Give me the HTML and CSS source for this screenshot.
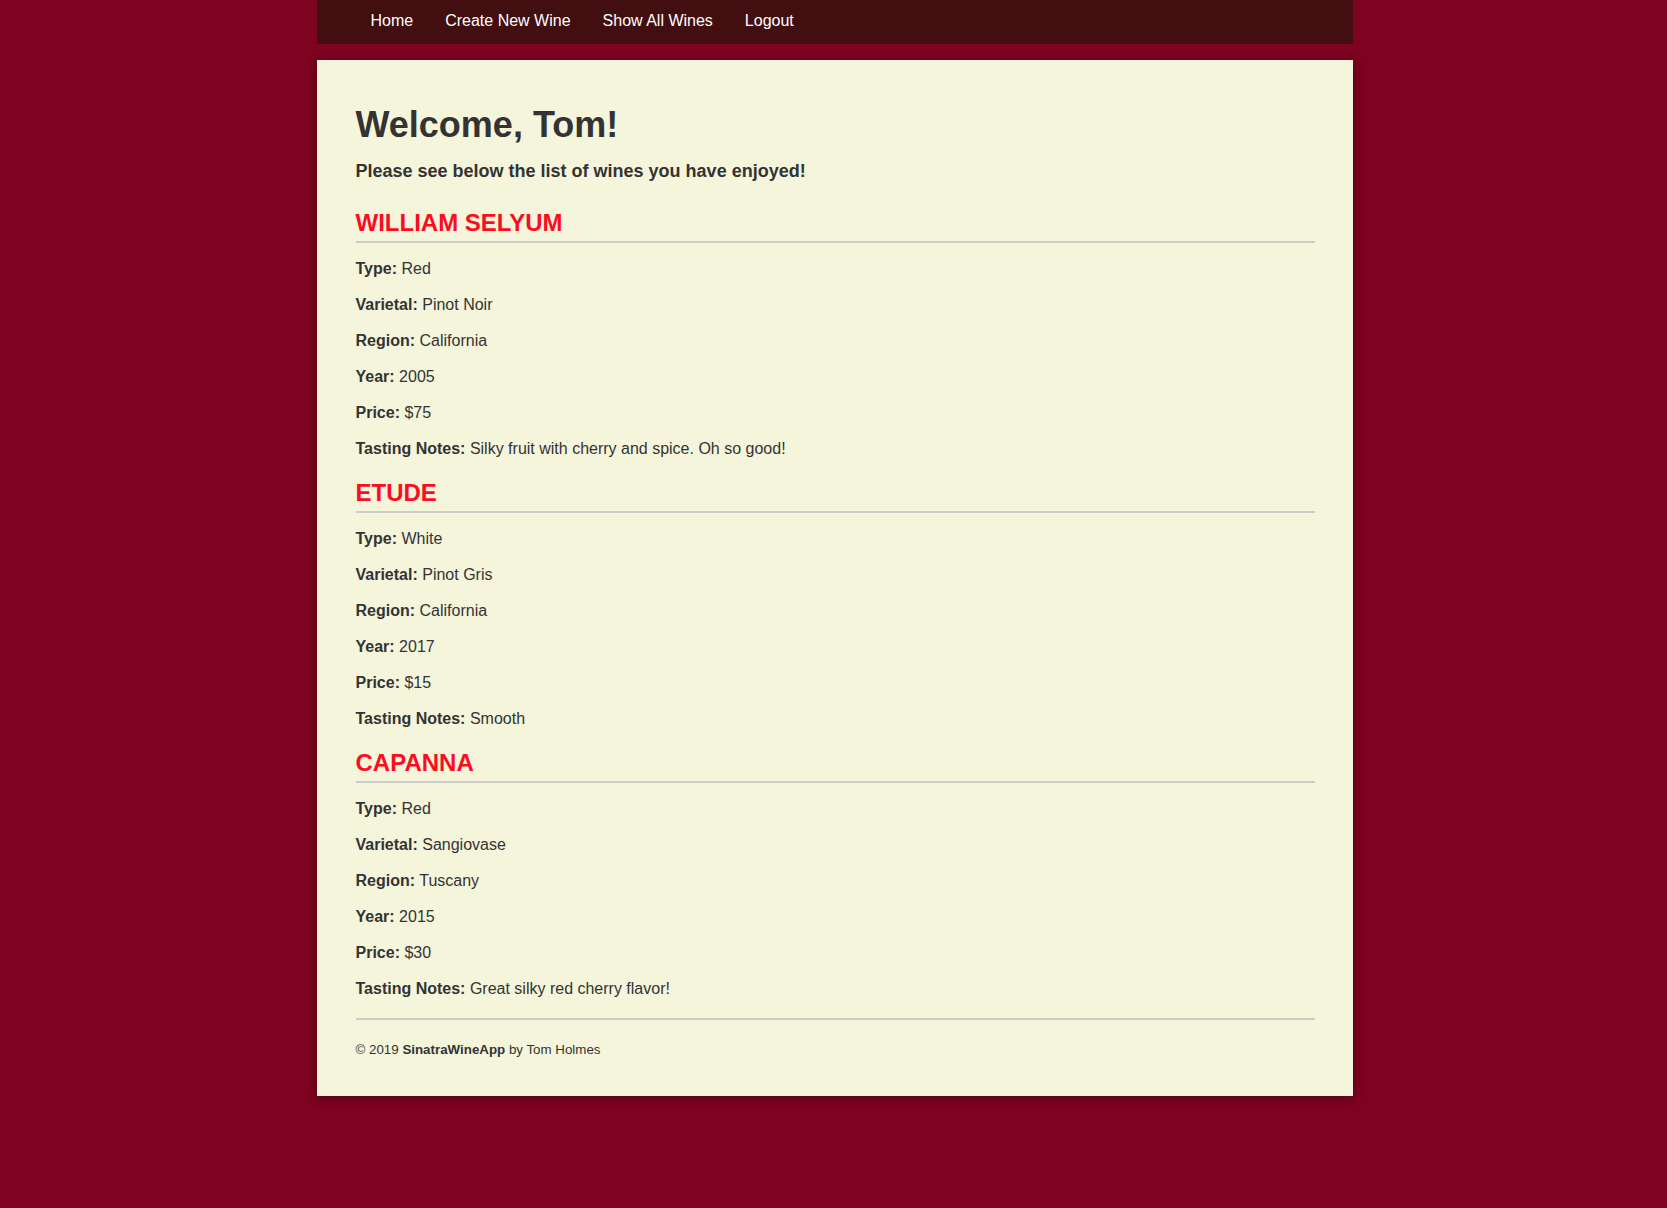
FILE: index.html
```html
<!DOCTYPE html>
<html lang="en">
<head>
<meta charset="utf-8">
<title>SinatraWineApp</title>
<link rel="stylesheet" href="styles.css">
</head>
<body>
<div class="wrap">
  <nav class="nav">
    <ul class="nav-list">
      <li><a href="#">Home</a></li>
      <li><a href="#">Create New Wine</a></li>
      <li><a href="#">Show All Wines</a></li>
      <li><a href="#">Logout</a></li>
    </ul>
  </nav>
  <main class="card">
    <h1 class="title">Welcome, Tom!</h1>
    <p class="subtitle">Please see below the list of wines you have enjoyed!</p>

    <section class="wine">
      <h2 class="wine-name">WILLIAM SELYUM</h2>
      <p class="row"><b>Type:</b> Red</p>
      <p class="row"><b>Varietal:</b> Pinot Noir</p>
      <p class="row"><b>Region:</b> California</p>
      <p class="row"><b>Year:</b> 2005</p>
      <p class="row"><b>Price:</b> $75</p>
      <p class="row"><b>Tasting Notes:</b> Silky fruit with cherry and spice. Oh so good!</p>
    </section>

    <section class="wine">
      <h2 class="wine-name">ETUDE</h2>
      <p class="row"><b>Type:</b> White</p>
      <p class="row"><b>Varietal:</b> Pinot Gris</p>
      <p class="row"><b>Region:</b> California</p>
      <p class="row"><b>Year:</b> 2017</p>
      <p class="row"><b>Price:</b> $15</p>
      <p class="row"><b>Tasting Notes:</b> Smooth</p>
    </section>

    <section class="wine">
      <h2 class="wine-name">CAPANNA</h2>
      <p class="row"><b>Type:</b> Red</p>
      <p class="row"><b>Varietal:</b> Sangiovase</p>
      <p class="row"><b>Region:</b> Tuscany</p>
      <p class="row"><b>Year:</b> 2015</p>
      <p class="row"><b>Price:</b> $30</p>
      <p class="row"><b>Tasting Notes:</b> Great silky red cherry flavor!</p>
    </section>

    <footer class="footer">
      <p>&copy; 2019 <b>SinatraWineApp</b> by Tom Holmes</p>
    </footer>
  </main>
</div>
</body>
</html>
```

FILE: styles.css
```css
* { box-sizing: border-box; }

html, body {
  margin: 0;
  padding: 0;
  background: #7d0320;
}

body {
  font-family: "Liberation Sans", Arial, Helvetica, sans-serif;
  color: #333333;
  min-height: 1208px;
}

.wrap {
  width: 1036px;
  margin: 0 auto;
  position: relative;
  left: 1px;
}

.nav {
  background: #420e10;
  height: 44px;
}

.nav-list {
  list-style: none;
  margin: 0;
  padding: 0 0 0 38px;
  display: flex;
  height: 44px;
  align-items: center;
}

.nav-list li a {
  display: block;
  padding: 0 16px;
  color: #ffffff;
  text-decoration: none;
  font-size: 16px;
  line-height: 20px;
  position: relative;
  top: -1px;
}

.card {
  margin-top: 16px;
  background: #f5f5dc;
  padding: 38px 38px 38px 39px;
  box-shadow: 0 2px 10px rgba(0, 0, 0, 0.35);
}

.title {
  margin: 5px 0 0;
  font-size: 36px;
  line-height: 44px;
  font-weight: bold;
}

.subtitle {
  margin: 13px 0 0;
  font-size: 18px;
  line-height: 22px;
  font-weight: bold;
}

.wine {
  margin-top: 27px;
}

.wine + .wine {
  margin-top: 20px;
}

.wine-name {
  margin: 0;
  color: #ff0b1f;
  font-size: 24px;
  line-height: 28px;
  font-weight: bold;
  padding-bottom: 4px;
  border-bottom: 2px solid #cccccc;
}

.row {
  margin: 16px 0 0;
  font-size: 16px;
  line-height: 20px;
}

.footer {
  margin-top: 19px;
  border-top: 2px solid #cccccc;
  padding-top: 22px;
}

.footer p {
  margin: 0;
  font-size: 13.33px;
  line-height: 16px;
}
```
